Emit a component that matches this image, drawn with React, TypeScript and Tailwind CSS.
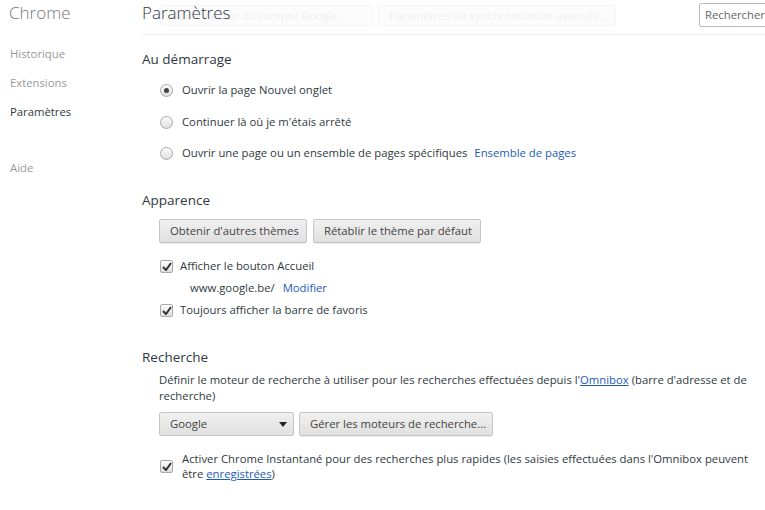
import React from "react";

const font = { fontFamily: '"Open Sans", "Noto Sans", Arial, sans-serif' };

function Radio({ checked }: { checked?: boolean }) {
  return (
    <span className="w-[13px] h-[13px] rounded-full border border-[#a9a9a9] bg-gradient-to-b from-[#fdfdfd] to-[#dedede] flex items-center justify-center shrink-0">
      {checked && <span className="w-[5px] h-[5px] rounded-full bg-[#444]" />}
    </span>
  );
}

function Checkbox() {
  return (
    <span className="w-[13px] h-[13px] rounded-[2px] border border-[#a9a9a9] bg-gradient-to-b from-[#fdfdfd] to-[#dedede] flex items-center justify-center shrink-0">
      <svg width="10" height="9" viewBox="0 0 10 9">
        <path d="M1 5 L4 8 L9 1" fill="none" stroke="#333" strokeWidth="2" />
      </svg>
    </span>
  );
}

function Button({ children, className = "" }: { children: React.ReactNode; className?: string }) {
  return (
    <button
      className={`h-[24px] px-[10px] whitespace-nowrap rounded-[2px] border border-[#c5c5c5] bg-gradient-to-b from-[#f0f0f0] to-[#e0e0e0] text-[#444] text-[11.3px] shadow-[0_1px_0_rgba(0,0,0,0.08)] ${className}`}
    >
      {children}
    </button>
  );
}

export default function App() {
  return (
    <div className="flex bg-white text-[#303942] text-[11.3px] h-[510px] w-[765px] overflow-hidden" style={font}>
      {/* Sidebar */}
      <div className="w-[142px] shrink-0 pl-[9px]">
        <div className="text-[17px] font-light text-[#777] leading-[24px] pt-[1px]">Chrome</div>
        <ul className="mt-[14px] text-[11.3px] text-[#999] pl-[1px]">
          <li className="leading-[29px]">Historique</li>
          <li className="leading-[29px]">Extensions</li>
          <li className="leading-[29px] text-[#303942]">Paramètres</li>
          <li className="leading-[29px] mt-[27px]">Aide</li>
        </ul>
      </div>

      {/* Main */}
      <div className="flex-1 min-w-0">
        <header className="relative h-[35px] border-b border-[#eee] flex items-start">
          <div className="absolute left-[18px] top-[5px] w-[213px] h-[21px] px-[10px] border border-[#f6f6f6] bg-[#fcfcfc] rounded-[2px] text-[11.3px] text-[#efefef] leading-[19px] whitespace-nowrap">
            Déconnecter du compte Google...
          </div>
          <div className="absolute left-[236px] top-[5px] w-[238px] h-[21px] px-[10px] border border-[#f6f6f6] bg-[#fcfcfc] rounded-[2px] text-[11.3px] text-[#efefef] leading-[19px] whitespace-nowrap overflow-hidden">
            Paramètres de synchronisation avancés...
          </div>
          <h1 className="relative text-[17px] font-light text-[#303942] leading-[24px] pt-[1px]">Paramètres</h1>
          <div className="ml-auto mt-[3px] w-[80px] h-[24px] border border-[#bbb] rounded-[2px] px-[5px] text-[11.3px] text-[#666] leading-[22px] -mr-[14px] whitespace-nowrap overflow-hidden">
            Rechercher
          </div>
        </header>

        {/* Au démarrage */}
        <section className="mt-[14px]">
          <h3 className="text-[13.5px] leading-[20px]">Au démarrage</h3>
          <div className="pl-[18px] mt-[11px] flex flex-col gap-[11px]">
            <label className="flex items-center gap-[9px] h-[21px]">
              <Radio checked />
              <span>Ouvrir la page Nouvel onglet</span>
            </label>
            <label className="flex items-center gap-[9px] h-[21px]">
              <Radio />
              <span>Continuer là où je m'étais arrêté</span>
            </label>
            <label className="flex items-center gap-[9px] h-[21px] translate-y-[-1px]">
              <Radio />
              <span>Ouvrir une page ou un ensemble de pages spécifiques</span>
              <span className="text-[#1e5bb8] ml-[-2px]">Ensemble de pages</span>
            </label>
          </div>
        </section>

        {/* Apparence */}
        <section className="mt-[25px]">
          <h3 className="text-[13.5px] leading-[20px]">Apparence</h3>
          <div className="pl-[17px] mt-[9px]">
            <div className="flex gap-[6px]">
              <Button className="w-[148px]">Obtenir d'autres thèmes</Button>
              <Button className="w-[168px]">Rétablir le thème par défaut</Button>
            </div>
            <label className="flex items-center gap-[7px] h-[21px] mt-[13px] pl-[1px]">
              <Checkbox />
              <span>Afficher le bouton Accueil</span>
            </label>
            <div className="pl-[31px] h-[23px] flex items-center gap-[8px]">
              <span>www.google.be/</span>
              <span className="text-[#1e5bb8]">Modifier</span>
            </div>
            <label className="flex items-center gap-[7px] h-[21px] pl-[1px]">
              <Checkbox />
              <span>Toujours afficher la barre de favoris</span>
            </label>
          </div>
        </section>

        {/* Recherche */}
        <section className="mt-[26px]">
          <h3 className="text-[13.5px] leading-[20px]">Recherche</h3>
          <div className="pl-[17px] mt-[5px] pr-[14px]">
            <p className="leading-[16px]">
              Définir le moteur de recherche à utiliser pour les recherches effectuées depuis l'
              <span className="text-[#1e5bb8] underline">Omnibox</span> (barre d'adresse et de recherche)
            </p>
            <div className="flex gap-[5px] mt-[8px]">
              <div className="w-[135px] h-[24px] rounded-[2px] border border-[#c5c5c5] bg-gradient-to-b from-[#f0f0f0] to-[#e0e0e0] text-[#444] flex items-center pl-[10px] pr-[6px]">
                <span className="flex-1">Google</span>
                <svg width="8" height="5" viewBox="0 0 8 5">
                  <path d="M0 0 H8 L4 5 Z" fill="#222" />
                </svg>
              </div>
              <Button className="w-[194px]">Gérer les moteurs de recherche...</Button>
            </div>
            <label className="flex items-start gap-[9px] mt-[15px] pl-[1px]">
              <span className="mt-[9px]">
                <Checkbox />
              </span>
              <span className="leading-[15px]">
                Activer Chrome Instantané pour des recherches plus rapides (les saisies effectuées dans l'Omnibox peuvent être{" "}
                <span className="text-[#1e5bb8] underline">enregistrées</span>)
              </span>
            </label>
          </div>
        </section>
      </div>
    </div>
  );
}
